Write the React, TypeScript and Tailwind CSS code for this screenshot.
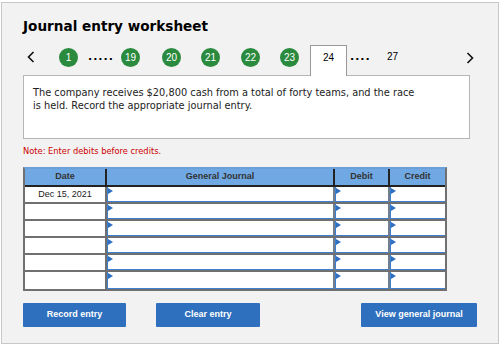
import React from "react";

const Circle = ({ n, className = "" }: { n: string; className?: string }) => (
  <div
    className={`w-[19px] h-[19px] rounded-full bg-[#2a8a3e] text-white flex items-center justify-center text-[10px] leading-none shrink-0 ${className}`}
    style={{ fontFamily: '"Liberation Sans", Arial, sans-serif' }}
  >
    {n}
  </div>
);

const Flag = () => (
  <div className="absolute left-[1px] top-[1px] w-0 h-0 border-y-[3px] border-y-transparent border-l-[5px] border-l-[#2f6fc0]" />
);

const InputCell = ({ last = false }: { last?: boolean }) => (
  <div className={`relative bg-white ${last ? "" : "border-r-2 border-[#6f7f90]"}`}>
    <div className="absolute inset-0 border-l border-b border-[#3f7fcf]" />
    <Flag />
  </div>
);

export default function App() {
  const rows = ["Dec 15, 2021", "", "", "", "", ""];
  return (
    <div className="w-[504px] h-[353px] bg-white pt-[2px] pl-[1px]">
      <div
        className="w-[498px] h-[342px] border border-[#c8c8c8] bg-[#f2f2f2] pl-[21px]"
        style={{ fontFamily: '"DejaVu Sans", Verdana, sans-serif' }}
      >
        <div className="pt-[15px] h-[42px] text-[13.6px] font-bold leading-[17px] text-black">
          Journal entry worksheet
        </div>
        {/* nav */}
        <div className="flex items-start h-[30px]">
          <div className="mt-[4px] ml-[4px] w-[10px] h-[16px] flex items-center shrink-0">
            <svg width="8" height="12" viewBox="0 0 8 12">
              <path d="M6.5 1 L1.5 6 L6.5 11" fill="none" stroke="#111" strokeWidth="1.6" />
            </svg>
          </div>
          <Circle n="1" className="mt-[3px] ml-[22px]" />
          <div className="ml-[10px] w-[26px] shrink-0 mt-[6px] text-[11px] font-bold leading-none tracking-[1px] overflow-hidden whitespace-nowrap">.....</div>
          <Circle n="19" className="mt-[3px] ml-[7px]" />
          <Circle n="20" className="mt-[3px] ml-[22px]" />
          <Circle n="21" className="mt-[3px] ml-[20px]" />
          <Circle n="22" className="mt-[3px] ml-[21px]" />
          <Circle n="23" className="mt-[3px] ml-[20px]" />
          <div
            className="ml-[11px] w-[37px] h-[31px] shrink-0 bg-white border border-b-0 border-[#999] relative z-10 text-center text-[10px] leading-[14px] pt-[5px]"
            style={{ fontFamily: '"Liberation Sans", Arial, sans-serif' }}
          >
            24
          </div>
          <div className="ml-[3px] w-[20px] shrink-0 mt-[6px] text-[11px] font-bold leading-none tracking-[1px] overflow-hidden whitespace-nowrap">....</div>
          <div
            className="ml-[17px] mt-[5px] text-[10px] leading-[14px]"
            style={{ fontFamily: '"Liberation Sans", Arial, sans-serif' }}
          >
            27
          </div>
          <div className="ml-[68px] mt-[5px] w-[10px] h-[16px] flex items-center shrink-0">
            <svg width="8" height="12" viewBox="0 0 8 12">
              <path d="M1.5 1 L6.5 6 L1.5 11" fill="none" stroke="#111" strokeWidth="1.6" />
            </svg>
          </div>
        </div>
        {/* question box */}
        <div className="w-[447px] h-[64px] bg-white border border-[#b5b5b5] pl-[9px] pt-[10px] text-[9.8px] leading-[13px] text-[#222]">
          The company receives $20,800 cash from a total of forty teams, and the race
          <br />
          is held. Record the appropriate journal entry.
        </div>
        <div className="mt-[7px] text-[8.3px] leading-[10px] text-[#cc0000]">Note: Enter debits before credits.</div>
        {/* table */}
        <div
          className="mt-[11px] w-[424px] border-2 border-[#707070] border-t-[#6a9fd8]"
          style={{ fontFamily: '"Liberation Sans", Arial, sans-serif' }}
        >
          <div className="grid grid-cols-[82px_228px_55px_55px] h-[18px] bg-[#6fa8e2] border-b-2 border-[#222] text-[9px] font-bold text-[#333]">
            <div className="flex items-center justify-center border-r-2 border-[#222]">Date</div>
            <div className="flex items-center justify-center border-r-2 border-[#222]">General Journal</div>
            <div className="flex items-center justify-center border-r-2 border-[#222]">Debit</div>
            <div className="flex items-center justify-center">Credit</div>
          </div>
          {rows.map((d, i) => (
            <div
              key={i}
              className={`grid grid-cols-[82px_228px_55px_55px] h-[17px] ${i < rows.length - 1 ? "border-b-2 border-[#707070]" : ""}`}
            >
              <div className="bg-white border-r-2 border-[#707070] flex items-center justify-center text-[9px] text-[#222]">
                {d}
              </div>
              <InputCell />
              <InputCell />
              <InputCell last />
            </div>
          ))}
        </div>
        {/* buttons */}
        <div className="flex mt-[12px]" style={{ fontFamily: '"Liberation Sans", Arial, sans-serif' }}>
          <div className="w-[103px] h-[24px] bg-[#2f70be] rounded-[1px] text-white text-[9px] font-bold flex items-center justify-center">
            Record entry
          </div>
          <div className="ml-[30px] w-[104px] h-[24px] bg-[#2f70be] rounded-[1px] text-white text-[9px] font-bold flex items-center justify-center">
            Clear entry
          </div>
          <div className="ml-[101px] w-[116px] h-[24px] bg-[#2f70be] rounded-[1px] text-white text-[9px] font-bold flex items-center justify-center">
            View general journal
          </div>
        </div>
      </div>
    </div>
  );
}
